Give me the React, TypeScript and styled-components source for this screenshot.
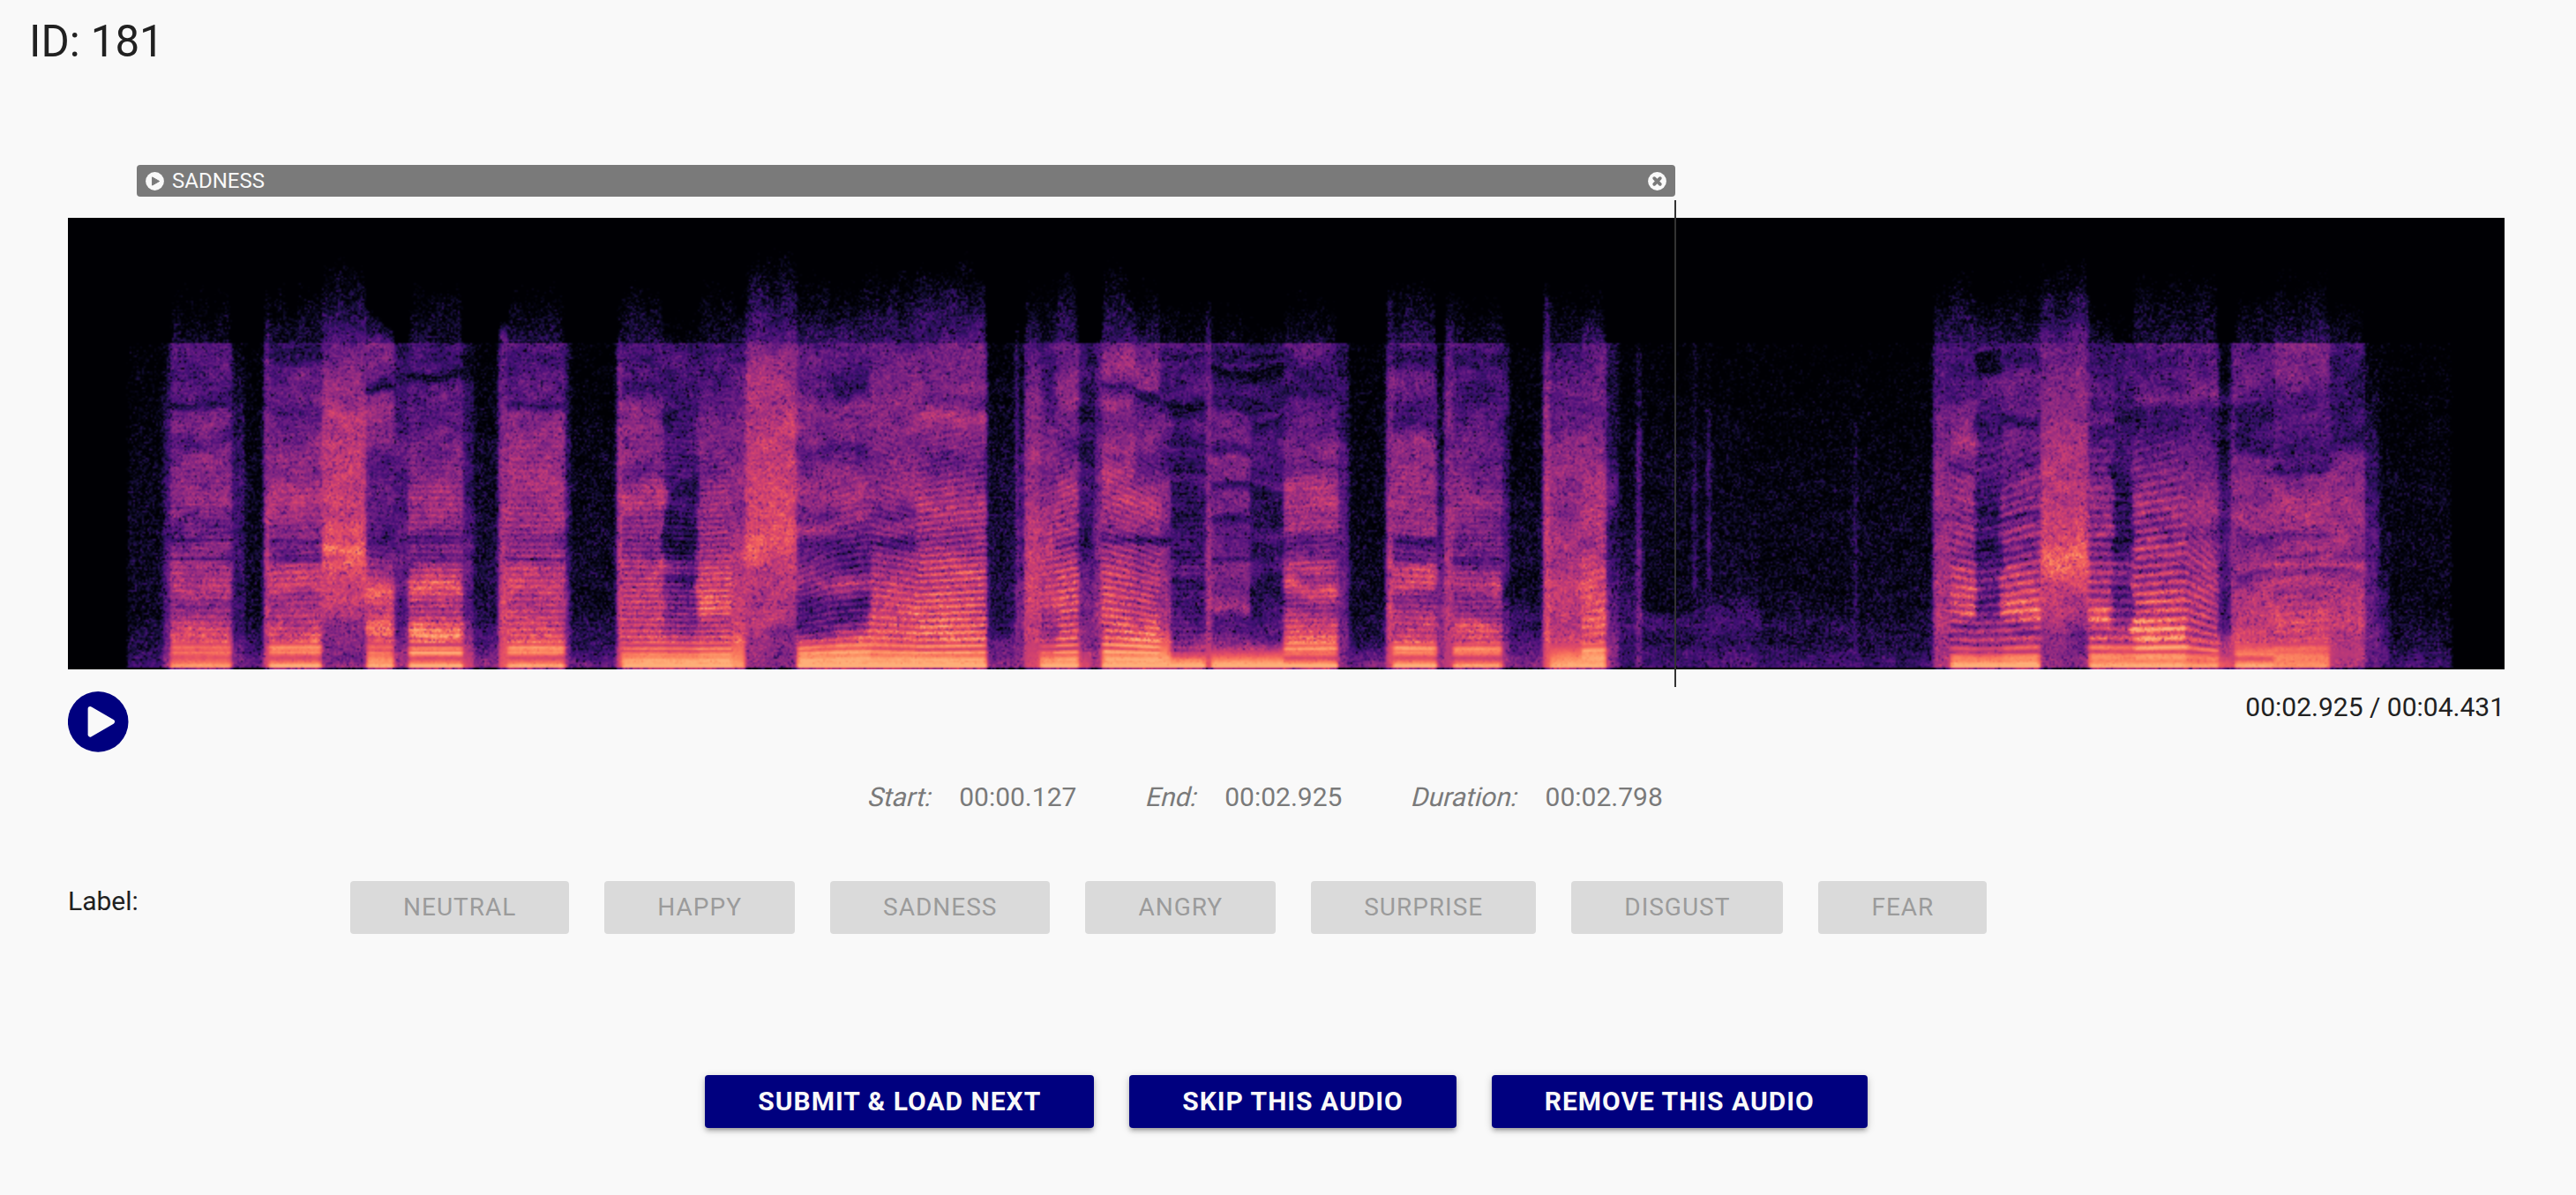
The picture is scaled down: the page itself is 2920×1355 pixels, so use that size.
import React, { useLayoutEffect, useRef } from "react";
import styled, { createGlobalStyle } from "styled-components";

const GlobalStyle = createGlobalStyle`
  *, *::before, *::after { box-sizing: border-box; }
  html, body { margin: 0; background: #f9f9f9; }
  body {
    font-family: Roboto, "Liberation Sans", sans-serif;
    font-size: 30px;
    line-height: 45px;
    color: #212121;
  }
`;

/* ---------- spectrogram data ---------- */

type Point = [y: number, level: number];

interface Segment {
  from: number;
  to: number;
  /** highest point that the energy above the 143px cut-off reaches */
  top?: number;
  /** level just above the cut-off */
  air?: number;
  profile: Point[];
  /** harmonic spacing at the start and at the end of the segment */
  pitch?: [number, number];
  ripple?: number;
}

const WIDTH = 2762;
const HEIGHT = 512;
const CUTOFF = 143;

const SEGMENTS: Segment[] = [
  { from: 66, to: 108, profile: [[150, 0.0], [300, 0.03], [450, 0.06], [490, 0.14], [507, 0.24]] },
  { from: 108, to: 117, profile: [[143, 0.06], [250, 0.22], [400, 0.26], [480, 0.36], [507, 0.5]] },
  { from: 117, to: 186, top: 76, air: 0.09, pitch: [7, 7], ripple: 0.05, profile: [[143, 0.31], [180, 0.29], [207, 0.29], [213, 0.12], [219, 0.34], [235, 0.41], [258, 0.3], [270, 0.4], [320, 0.46], [345, 0.36], [364, 0.34], [366, 0.22], [370, 0.42], [385, 0.36], [387, 0.24], [391, 0.48], [425, 0.54], [438, 0.4], [458, 0.5], [475, 0.6], [492, 0.72], [500, 0.64], [507, 0.8]] },
  { from: 186, to: 200, profile: [[143, 0.06], [250, 0.18], [350, 0.24], [450, 0.2], [507, 0.36]] },
  { from: 200, to: 222, profile: [[150, 0.0], [300, 0.03], [450, 0.07], [507, 0.3]] },
  { from: 222, to: 228, top: 66, air: 0.25, profile: [[143, 0.35], [250, 0.45], [400, 0.55], [507, 0.6]] },
  { from: 228, to: 288, top: 76, air: 0.12, pitch: [7, 7.2], ripple: 0.06, profile: [[143, 0.27], [160, 0.2], [175, 0.33], [210, 0.35], [225, 0.3], [260, 0.42], [300, 0.43], [325, 0.53], [345, 0.46], [363, 0.4], [366, 0.22], [370, 0.34], [385, 0.38], [387, 0.3], [393, 0.5], [422, 0.62], [432, 0.46], [455, 0.5], [468, 0.62], [480, 0.64], [490, 0.8], [500, 0.6], [507, 0.85]] },
  { from: 288, to: 339, top: 45, air: 0.26, profile: [[143, 0.36], [180, 0.42], [225, 0.53], [300, 0.54], [340, 0.59], [368, 0.63], [378, 0.74], [386, 0.6], [392, 0.69], [415, 0.6], [450, 0.5], [462, 0.4], [500, 0.36], [507, 0.45]] },
  { from: 339, to: 370, top: 112, air: 0.24, pitch: [7.2, 7], ripple: 0.05, profile: [[143, 0.4], [182, 0.34], [190, 0.18], [194, 0.06], [200, 0.4], [220, 0.46], [255, 0.38], [280, 0.26], [320, 0.36], [366, 0.24], [390, 0.42], [410, 0.56], [425, 0.66], [445, 0.54], [463, 0.74], [475, 0.6], [490, 0.68], [507, 0.84]] },
  { from: 370, to: 387, profile: [[143, 0.15], [190, 0.22], [260, 0.32], [330, 0.24], [390, 0.35], [460, 0.25], [507, 0.5]] },
  { from: 387, to: 449, top: 76, air: 0.12, pitch: [6.8, 6.8], ripple: 0.08, profile: [[143, 0.28], [172, 0.28], [178, 0.04], [182, 0.1], [188, 0.32], [230, 0.33], [265, 0.38], [310, 0.47], [350, 0.47], [366, 0.28], [372, 0.42], [387, 0.34], [394, 0.48], [421, 0.67], [435, 0.54], [450, 0.5], [462, 0.64], [474, 0.8], [484, 0.6], [493, 0.85], [500, 0.6], [507, 0.86]] },
  { from: 449, to: 460, profile: [[143, 0.1], [175, 0.02], [200, 0.16], [350, 0.26], [400, 0.36], [450, 0.3], [507, 0.6]] },
  { from: 460, to: 488, profile: [[150, 0.0], [250, 0.05], [400, 0.1], [460, 0.14], [507, 0.42]] },
  { from: 488, to: 498, top: 110, air: 0.32, profile: [[143, 0.34], [250, 0.42], [350, 0.48], [440, 0.56], [507, 0.66]] },
  { from: 498, to: 564, top: 72, air: 0.12, pitch: [6.9, 6.9], ripple: 0.07, profile: [[143, 0.34], [160, 0.25], [190, 0.34], [210, 0.3], [216, 0.22], [225, 0.4], [260, 0.46], [310, 0.48], [345, 0.48], [364, 0.38], [383, 0.48], [387, 0.34], [393, 0.52], [420, 0.56], [440, 0.5], [465, 0.62], [480, 0.64], [491, 0.82], [500, 0.6], [507, 0.82]] },
  { from: 564, to: 570, profile: [[200, 0.1], [350, 0.2], [507, 0.4]] },
  { from: 570, to: 622, profile: [[150, 0.0], [300, 0.04], [440, 0.07], [490, 0.16], [507, 0.34]] },
  { from: 622, to: 629, top: 80, air: 0.26, profile: [[143, 0.34], [220, 0.45], [300, 0.5], [507, 0.62]] },
  { from: 629, to: 677, top: 70, air: 0.14, pitch: [6.6, 6.6], ripple: 0.1, profile: [[143, 0.29], [195, 0.26], [215, 0.42], [270, 0.44], [285, 0.34], [300, 0.46], [325, 0.55], [345, 0.44], [380, 0.38], [393, 0.52], [430, 0.54], [460, 0.58], [482, 0.6], [492, 0.7], [507, 0.88]] },
  { from: 677, to: 714, top: 105, air: 0.05, pitch: [6.6, 6.5], ripple: 0.1, profile: [[143, 0.2], [170, 0.28], [215, 0.24], [225, 0.14], [235, 0.26], [290, 0.26], [308, 0.14], [320, 0.24], [335, 0.14], [385, 0.15], [392, 0.35], [405, 0.36], [414, 0.16], [420, 0.32], [455, 0.4], [480, 0.58], [492, 0.68], [507, 0.88]] },
  { from: 714, to: 752, top: 70, air: 0.12, pitch: [6.5, 6.6], ripple: 0.11, profile: [[143, 0.28], [200, 0.3], [235, 0.37], [270, 0.38], [295, 0.36], [325, 0.5], [350, 0.42], [375, 0.46], [395, 0.56], [420, 0.58], [445, 0.68], [460, 0.5], [482, 0.62], [492, 0.74], [507, 0.88]] },
  { from: 752, to: 769, top: 70, air: 0.14, profile: [[143, 0.28], [230, 0.36], [320, 0.45], [370, 0.5], [420, 0.52], [465, 0.6], [507, 0.8]] },
  { from: 769, to: 826, top: 36, air: 0.28, profile: [[143, 0.38], [170, 0.48], [220, 0.53], [280, 0.57], [330, 0.61], [375, 0.64], [395, 0.56], [430, 0.5], [460, 0.5], [475, 0.4], [507, 0.42]] },
  { from: 826, to: 868, top: 60, air: 0.18, pitch: [6.6, 7.6], ripple: 0.08, profile: [[143, 0.34], [195, 0.32], [210, 0.42], [250, 0.38], [262, 0.26], [275, 0.38], [300, 0.46], [340, 0.36], [352, 0.48], [368, 0.28], [390, 0.34], [415, 0.46], [440, 0.28], [465, 0.34], [480, 0.6], [492, 0.76], [507, 0.88]] },
  { from: 868, to: 909, top: 66, air: 0.2, pitch: [7.6, 8], ripple: 0.09, profile: [[143, 0.36], [170, 0.32], [188, 0.18], [200, 0.26], [215, 0.44], [250, 0.4], [262, 0.26], [280, 0.38], [310, 0.5], [340, 0.42], [366, 0.3], [395, 0.3], [412, 0.5], [435, 0.24], [455, 0.34], [470, 0.56], [484, 0.72], [507, 0.88]] },
  { from: 909, to: 964, top: 56, air: 0.23, pitch: [8, 7.4], ripple: 0.1, profile: [[143, 0.33], [190, 0.42], [230, 0.45], [270, 0.38], [310, 0.48], [340, 0.36], [355, 0.44], [368, 0.26], [390, 0.48], [412, 0.52], [430, 0.54], [455, 0.62], [470, 0.66], [490, 0.7], [507, 0.88]] },
  { from: 964, to: 1042, top: 48, air: 0.25, pitch: [7.3, 7.7], ripple: 0.14, profile: [[143, 0.38], [190, 0.42], [208, 0.36], [225, 0.52], [255, 0.4], [270, 0.34], [300, 0.44], [335, 0.52], [368, 0.42], [385, 0.52], [410, 0.56], [435, 0.58], [460, 0.66], [475, 0.68], [492, 0.7], [507, 0.9]] },
  { from: 1042, to: 1074, profile: [[150, 0.04], [200, 0.06], [360, 0.08], [450, 0.14], [507, 0.4]] },
  { from: 1074, to: 1079, top: 120, air: 0.2, profile: [[143, 0.24], [250, 0.34], [400, 0.36], [507, 0.45]] },
  { from: 1079, to: 1085, profile: [[200, 0.04], [507, 0.4]] },
  { from: 1085, to: 1103, top: 66, air: 0.18, profile: [[143, 0.3], [220, 0.42], [300, 0.46], [370, 0.54], [430, 0.6], [460, 0.52], [507, 0.6]] },
  { from: 1103, to: 1120, top: 66, air: 0.1, pitch: [7.4, 7.6], ripple: 0.07, profile: [[143, 0.28], [190, 0.22], [225, 0.36], [300, 0.4], [330, 0.48], [370, 0.5], [430, 0.56], [465, 0.42], [490, 0.62], [507, 0.86]] },
  { from: 1120, to: 1147, top: 56, air: 0.25, pitch: [7.6, 8], ripple: 0.15, profile: [[143, 0.32], [180, 0.4], [208, 0.48], [235, 0.36], [260, 0.3], [300, 0.48], [350, 0.48], [372, 0.38], [405, 0.56], [435, 0.6], [460, 0.6], [490, 0.66], [507, 0.88]] },
  { from: 1147, to: 1160, profile: [[143, 0.2], [215, 0.16], [218, 0.06], [250, 0.22], [262, 0.08], [300, 0.26], [365, 0.12], [400, 0.32], [460, 0.36], [507, 0.6]] },
  { from: 1160, to: 1165, profile: [[143, 0.1], [300, 0.14], [507, 0.44]] },
  { from: 1165, to: 1172, top: 130, air: 0.25, profile: [[143, 0.3], [300, 0.34], [507, 0.5]] },
  { from: 1172, to: 1209, top: 56, air: 0.24, pitch: [8.2, 7.6], ripple: 0.14, profile: [[143, 0.42], [170, 0.5], [193, 0.34], [197, 0.14], [202, 0.3], [215, 0.48], [240, 0.38], [265, 0.46], [310, 0.54], [340, 0.5], [358, 0.42], [366, 0.26], [372, 0.46], [405, 0.56], [435, 0.58], [465, 0.64], [490, 0.74], [507, 0.88]] },
  { from: 1209, to: 1238, top: 62, air: 0.16, pitch: [7.6, 7], ripple: 0.12, profile: [[143, 0.34], [160, 0.38], [195, 0.44], [203, 0.12], [212, 0.34], [250, 0.38], [280, 0.34], [320, 0.52], [358, 0.44], [366, 0.18], [373, 0.4], [405, 0.5], [450, 0.5], [468, 0.68], [492, 0.78], [507, 0.88]] },
  { from: 1238, to: 1250, top: 100, air: 0.06, profile: [[143, 0.3], [154, 0.14], [205, 0.32], [209, 0.1], [225, 0.36], [282, 0.22], [300, 0.44], [330, 0.44], [360, 0.3], [366, 0.1], [375, 0.42], [460, 0.48], [507, 0.88]] },
  { from: 1250, to: 1290, top: 95, air: 0.05, pitch: [7, 7], ripple: 0.06, profile: [[143, 0.3], [152, 0.28], [155, 0.1], [160, 0.28], [200, 0.3], [208, 0.18], [215, 0.06], [222, 0.16], [235, 0.32], [255, 0.18], [265, 0.3], [285, 0.22], [290, 0.12], [296, 0.28], [320, 0.16], [345, 0.14], [370, 0.2], [385, 0.16], [395, 0.34], [410, 0.3], [415, 0.12], [425, 0.26], [440, 0.18], [460, 0.26], [478, 0.34], [492, 0.5], [507, 0.88]] },
  { from: 1290, to: 1296, top: 90, air: 0.3, profile: [[143, 0.36], [300, 0.42], [507, 0.6]] },
  { from: 1296, to: 1340, top: 100, air: 0.04, profile: [[143, 0.28], [152, 0.1], [163, 0.32], [170, 0.03], [178, 0.12], [195, 0.28], [214, 0.14], [225, 0.34], [255, 0.36], [266, 0.18], [275, 0.4], [300, 0.36], [305, 0.16], [315, 0.42], [336, 0.38], [342, 0.2], [350, 0.34], [384, 0.32], [387, 0.22], [395, 0.4], [430, 0.38], [446, 0.52], [458, 0.3], [475, 0.28], [490, 0.54], [507, 0.88]] },
  { from: 1340, to: 1378, top: 120, air: 0.03, profile: [[143, 0.14], [150, 0.28], [155, 0.05], [162, 0.3], [168, 0.03], [178, 0.04], [188, 0.26], [215, 0.2], [225, 0.28], [230, 0.1], [240, 0.26], [280, 0.28], [291, 0.14], [305, 0.3], [312, 0.12], [335, 0.14], [348, 0.12], [362, 0.26], [372, 0.13], [385, 0.16], [395, 0.3], [413, 0.12], [440, 0.16], [460, 0.3], [475, 0.22], [490, 0.54], [507, 0.88]] },
  { from: 1378, to: 1440, top: 76, air: 0.09, pitch: [6.4, 6.6], ripple: 0.07, profile: [[143, 0.34], [172, 0.24], [185, 0.28], [197, 0.2], [210, 0.3], [250, 0.33], [270, 0.42], [283, 0.36], [300, 0.48], [325, 0.53], [350, 0.44], [362, 0.34], [385, 0.36], [393, 0.56], [405, 0.42], [418, 0.62], [440, 0.42], [460, 0.62], [475, 0.64], [490, 0.78], [500, 0.6], [507, 0.88]] },
  { from: 1440, to: 1452, profile: [[143, 0.16], [175, 0.1], [190, 0.24], [240, 0.22], [243, 0.05], [260, 0.3], [350, 0.3], [400, 0.34], [460, 0.36], [507, 0.42]] },
  { from: 1452, to: 1495, profile: [[150, 0.0], [300, 0.03], [440, 0.06], [485, 0.16], [507, 0.38]] },
  { from: 1495, to: 1502, top: 66, air: 0.28, profile: [[143, 0.34], [300, 0.48], [507, 0.62]] },
  { from: 1502, to: 1553, top: 66, air: 0.15, pitch: [6.9, 6.7], ripple: 0.07, profile: [[143, 0.34], [158, 0.2], [190, 0.36], [210, 0.3], [232, 0.24], [250, 0.46], [300, 0.46], [335, 0.48], [358, 0.46], [367, 0.2], [376, 0.36], [387, 0.3], [397, 0.54], [418, 0.56], [432, 0.38], [458, 0.56], [475, 0.56], [490, 0.82], [500, 0.6], [507, 0.88]] },
  { from: 1553, to: 1560, profile: [[143, 0.02], [300, 0.12], [507, 0.5]] },
  { from: 1560, to: 1570, top: 66, air: 0.22, profile: [[143, 0.34], [300, 0.42], [400, 0.5], [507, 0.56]] },
  { from: 1570, to: 1626, top: 85, air: 0.08, pitch: [6.6, 6.6], ripple: 0.06, profile: [[143, 0.3], [165, 0.2], [185, 0.32], [207, 0.16], [220, 0.3], [270, 0.34], [300, 0.38], [325, 0.45], [355, 0.38], [383, 0.34], [388, 0.24], [400, 0.42], [415, 0.55], [430, 0.4], [455, 0.46], [467, 0.62], [480, 0.58], [491, 0.8], [500, 0.56], [507, 0.82]] },
  { from: 1626, to: 1635, top: 120, air: 0.03, profile: [[143, 0.16], [300, 0.24], [400, 0.28], [427, 0.06], [440, 0.26], [507, 0.5]] },
  { from: 1635, to: 1673, profile: [[150, 0.0], [300, 0.03], [440, 0.08], [507, 0.4]] },
  { from: 1673, to: 1681, top: 70, air: 0.33, profile: [[143, 0.36], [230, 0.5], [380, 0.58], [507, 0.66]] },
  { from: 1681, to: 1717, top: 76, air: 0.08, profile: [[143, 0.3], [150, 0.15], [170, 0.28], [200, 0.34], [240, 0.32], [260, 0.42], [300, 0.45], [330, 0.42], [380, 0.48], [430, 0.54], [460, 0.52], [485, 0.6], [493, 0.7], [507, 0.84]] },
  { from: 1717, to: 1744, top: 70, air: 0.18, pitch: [8.6, 9.2], ripple: 0.07, profile: [[143, 0.34], [170, 0.34], [200, 0.42], [220, 0.32], [260, 0.42], [300, 0.52], [370, 0.48], [410, 0.6], [455, 0.68], [475, 0.6], [492, 0.8], [507, 0.84]] },
  { from: 1744, to: 1758, profile: [[143, 0.1], [270, 0.12], [290, 0.28], [330, 0.28], [350, 0.12], [430, 0.26], [507, 0.44]] },
  { from: 1758, to: 1779, profile: [[143, 0.0], [300, 0.03], [507, 0.2]] },
  { from: 1779, to: 1785, top: 135, air: 0.02, profile: [[143, 0.1], [235, 0.14], [242, 0.32], [400, 0.36], [507, 0.4]] },
  { from: 1785, to: 1843, profile: [[143, 0.0], [300, 0.04], [440, 0.05], [455, 0.22], [470, 0.1], [507, 0.24]] },
  { from: 1843, to: 1847, profile: [[240, 0.1], [320, 0.3], [415, 0.3], [430, 0.08], [507, 0.24]] },
  { from: 1847, to: 1858, profile: [[143, 0.0], [420, 0.06], [460, 0.16], [507, 0.24]] },
  { from: 1858, to: 1862, profile: [[200, 0.04], [240, 0.28], [410, 0.32], [430, 0.1], [507, 0.28]] },
  { from: 1862, to: 1918, profile: [[143, -0.01], [300, 0.03], [420, 0.06], [458, 0.24], [478, 0.16], [507, 0.26]] },
  { from: 1918, to: 2024, profile: [[143, -0.02], [300, 0.02], [420, 0.03], [450, 0.07], [458, 0.14], [478, 0.1], [507, 0.24]] },
  { from: 2024, to: 2028, profile: [[220, 0.02], [240, 0.18], [440, 0.19], [507, 0.26]] },
  { from: 2028, to: 2114, profile: [[143, -0.02], [300, 0.02], [440, 0.05], [490, 0.12], [507, 0.22]] },
  { from: 2114, to: 2135, top: 66, air: 0.15, profile: [[143, 0.25], [210, 0.32], [260, 0.42], [340, 0.44], [430, 0.52], [480, 0.48], [507, 0.5]] },
  { from: 2135, to: 2164, top: 60, air: 0.18, pitch: [10.2, 9.6], ripple: 0.13, profile: [[143, 0.25], [200, 0.32], [240, 0.48], [272, 0.46], [288, 0.3], [300, 0.46], [360, 0.42], [380, 0.38], [400, 0.52], [425, 0.6], [450, 0.62], [465, 0.42], [490, 0.56], [505, 0.84]] },
  { from: 2164, to: 2193, top: 92, air: 0.14, pitch: [9.6, 10], ripple: 0.11, profile: [[143, 0.2], [148, 0.28], [152, 0.04], [172, 0.04], [180, 0.32], [230, 0.24], [280, 0.3], [310, 0.2], [330, 0.15], [350, 0.24], [372, 0.14], [395, 0.24], [410, 0.36], [440, 0.28], [465, 0.44], [490, 0.52], [505, 0.84]] },
  { from: 2193, to: 2237, top: 62, air: 0.13, pitch: [10, 10.8], ripple: 0.14, profile: [[143, 0.27], [165, 0.24], [180, 0.36], [220, 0.34], [230, 0.14], [240, 0.36], [285, 0.3], [300, 0.4], [335, 0.44], [340, 0.26], [355, 0.45], [380, 0.36], [400, 0.52], [430, 0.56], [450, 0.7], [465, 0.4], [490, 0.62], [505, 0.86]] },
  { from: 2237, to: 2290, top: 45, air: 0.25, profile: [[143, 0.34], [190, 0.42], [240, 0.5], [300, 0.53], [350, 0.58], [372, 0.62], [382, 0.7], [400, 0.69], [412, 0.58], [450, 0.5], [475, 0.38], [507, 0.42]] },
  { from: 2290, to: 2318, top: 82, air: 0.14, pitch: [10.6, 10.6], ripple: 0.13, profile: [[143, 0.18], [165, 0.16], [185, 0.32], [215, 0.28], [235, 0.36], [246, 0.16], [265, 0.34], [310, 0.42], [360, 0.46], [365, 0.3], [395, 0.5], [430, 0.5], [458, 0.7], [470, 0.5], [495, 0.74], [507, 0.82]] },
  { from: 2318, to: 2341, top: 105, air: 0.06, pitch: [10.5, 10.5], ripple: 0.1, profile: [[143, 0.26], [200, 0.28], [218, 0.14], [235, 0.2], [280, 0.2], [310, 0.15], [350, 0.17], [370, 0.12], [395, 0.4], [430, 0.26], [455, 0.4], [475, 0.54], [507, 0.82]] },
  { from: 2341, to: 2400, top: 62, air: 0.14, pitch: [10.1, 10.7], ripple: 0.16, profile: [[143, 0.36], [165, 0.26], [190, 0.3], [205, 0.4], [220, 0.18], [235, 0.26], [265, 0.34], [300, 0.42], [330, 0.48], [360, 0.4], [375, 0.5], [390, 0.42], [420, 0.54], [450, 0.56], [465, 0.76], [485, 0.72], [507, 0.82]] },
  { from: 2400, to: 2438, top: 60, air: 0.14, pitch: [10.7, 8.4], ripple: 0.14, profile: [[143, 0.36], [170, 0.3], [200, 0.42], [220, 0.26], [250, 0.3], [300, 0.42], [330, 0.46], [360, 0.38], [390, 0.46], [420, 0.5], [450, 0.5], [475, 0.54], [495, 0.68], [507, 0.78]] },
  { from: 2438, to: 2452, profile: [[143, 0.05], [180, 0.03], [210, 0.24], [225, 0.06], [250, 0.2], [264, 0.04], [300, 0.24], [400, 0.28], [470, 0.3], [507, 0.66]] },
  { from: 2452, to: 2457, top: 120, air: 0.22, profile: [[143, 0.34], [300, 0.44], [507, 0.56]] },
  { from: 2457, to: 2500, top: 78, air: 0.12, profile: [[143, 0.34], [180, 0.36], [210, 0.3], [222, 0.2], [250, 0.25], [262, 0.14], [275, 0.38], [288, 0.32], [295, 0.4], [330, 0.44], [355, 0.46], [362, 0.34], [385, 0.42], [398, 0.54], [404, 0.34], [420, 0.52], [460, 0.52], [480, 0.58], [495, 0.76], [500, 0.62], [507, 0.84]] },
  { from: 2500, to: 2565, top: 60, air: 0.17, pitch: [9.6, 10.4], ripple: 0.04, profile: [[143, 0.4], [180, 0.4], [202, 0.3], [225, 0.32], [258, 0.26], [272, 0.34], [282, 0.2], [292, 0.42], [320, 0.48], [355, 0.48], [359, 0.36], [375, 0.48], [385, 0.4], [396, 0.56], [404, 0.4], [418, 0.54], [426, 0.42], [440, 0.5], [458, 0.6], [475, 0.54], [492, 0.72], [507, 0.78]] },
  { from: 2565, to: 2605, top: 95, air: 0.1, profile: [[143, 0.28], [180, 0.24], [200, 0.16], [220, 0.26], [248, 0.2], [270, 0.36], [310, 0.46], [355, 0.44], [375, 0.46], [385, 0.4], [396, 0.56], [404, 0.34], [418, 0.52], [440, 0.5], [460, 0.6], [480, 0.5], [495, 0.54], [507, 0.5]] },
  { from: 2605, to: 2620, profile: [[143, 0.02], [250, 0.14], [300, 0.22], [400, 0.3], [450, 0.32], [507, 0.32]] },
  { from: 2620, to: 2632, profile: [[200, 0.0], [380, 0.06], [440, 0.2], [507, 0.26]] },
  { from: 2632, to: 2705, profile: [[143, -0.02], [300, 0.02], [440, 0.03], [485, 0.1], [507, 0.24]] },
];

const MAGMA: [number, number, number][] = [
  [0, 0, 4], [6, 5, 24], [20, 14, 54], [39, 17, 84], [59, 15, 112], [80, 18, 123],
  [100, 26, 128], [120, 34, 130], [140, 41, 129], [161, 47, 127], [183, 55, 121],
  [203, 62, 113], [222, 73, 104], [237, 89, 95], [247, 112, 92], [252, 137, 97],
  [254, 159, 109], [254, 184, 128], [254, 207, 146],
];

const hash = (x: number, y: number): number => {
  let h = Math.imul(x + 1013, 374761393) ^ Math.imul(y + 733, 668265263);
  h = Math.imul(h ^ (h >>> 13), 1274126177);
  h = Math.imul(h ^ (h >>> 16), 2246822519);
  return ((h ^ (h >>> 15)) >>> 0) / 4294967296;
};

const smoothNoise = (x: number, y: number): number => {
  const xi = Math.floor(x);
  const yi = Math.floor(y);
  const fx = (x - xi) ** 2 * (3 - 2 * (x - xi));
  const fy = (y - yi) ** 2 * (3 - 2 * (y - yi));
  const a = hash(xi, yi) * (1 - fx) + hash(xi + 1, yi) * fx;
  const b = hash(xi, yi + 1) * (1 - fx) + hash(xi + 1, yi + 1) * fx;
  return a * (1 - fy) + b * fy - 0.5;
};

const readProfile = (profile: Point[], y: number): number => {
  if (y <= profile[0][0]) return profile[0][1];
  for (let i = 1; i < profile.length; i++) {
    const [y1, v1] = profile[i];
    if (y <= y1) {
      const [y0, v0] = profile[i - 1];
      return v0 + ((v1 - v0) * (y - y0)) / (y1 - y0);
    }
  }
  return profile[profile.length - 1][1];
};

const SILENCE = -0.3;

const levelAt = (px: number, y: number): number => {
  /* quiet onsets stay upright while neighbouring sounds flow into each other */
  const drift = (smoothNoise(px / 40, y / 26) + smoothNoise(px / 25 + 40, y / 9) * 0.6) * 7;
  const here = SEGMENTS.find((s) => px >= s.from && px < s.to);
  const moved = SEGMENTS.find((s) => px + drift >= s.from && px + drift < s.to);
  const wide = (s?: Segment) => s !== undefined && s.pitch !== undefined;
  const seg = wide(here) && wide(moved) ? moved : here;
  if (!seg) return SILENCE;
  if (y < CUTOFF) {
    if (seg.top === undefined || seg.air === undefined) return SILENCE;
    const edge = seg.top + smoothNoise(px / 11, y / 50) * 30;
    const rise = Math.min(1, (y - edge) / (CUTOFF - seg.top));
    return rise < 0 ? SILENCE : -0.14 + (seg.air + 0.12) * rise ** 0.72;
  }
  const bend = smoothNoise(px / 30, y / 60) * 14;
  const wobble = y > 478 ? 0 : y > 355 && y < 392 ? 0 : bend;
  let level = readProfile(seg.profile, Math.max(CUTOFF, y + wobble));
  if (level < 0.2 && seg.profile[0][1] < 0.1) level -= 0.05 * Math.max(0, 1 - (y - CUTOFF) / 160);
  if (seg.pitch && seg.ripple) {
    const t = (px - seg.from) / (seg.to - seg.from);
    const pitch = seg.pitch[0] + (seg.pitch[1] - seg.pitch[0]) * t;
    const phase = ((HEIGHT - 4 - y) / pitch) * Math.PI * 2;
    const depth = Math.min(1, Math.max(0.1, (y - 190) / 220));
    level += Math.cos(phase) * seg.ripple * 0.8 * depth * (y > 494 ? 0.3 : 1);
  }
  if (level > 0.2) level -= 0.025 + 0.03 * Math.max(0, 1 - (y - CUTOFF) / 250);
  if (y > 509) level -= 0.35;
  return level;
};

const renderSpectrogram = (canvas: HTMLCanvasElement) => {
  const ctx = canvas.getContext("2d");
  if (!ctx) return;
  const cols = canvas.width;
  const rows = canvas.height;
  const image = ctx.createImageData(cols, rows);
  const field = new Float32Array(cols * rows);
  for (let r = 0; r < rows; r++) {
    for (let c = 0; c < cols; c++) field[r * cols + c] = levelAt(c * 2 + 1, r * 2 + 1);
  }
  const weights = [0.08, 0.2, 0.44, 0.2, 0.08];
  for (let r = 0; r < rows; r++) {
    for (let c = 0; c < cols; c++) {
      const i = r * cols + c;
      let base = 0;
      for (let k = -2; k <= 2; k++) {
        const cc = Math.min(cols - 1, Math.max(0, c + k));
        base += field[r * cols + cc] * weights[k + 2];
      }
      const u = (hash(c, r) * 2 + hash(c >> 1, r + 999) + hash(c + 555, r >> 1)) / 4;
      const steady = r > 240 && base > 0.5 ? 0.25 : 1;
      const grain = u < 0.3 ? (u - 0.3) * 0.6 + (u - 0.5) * 0.24 : (u - 0.5) * 0.24;
      const patch = smoothNoise(c / 10, r / 8) * 0.09 + smoothNoise(c / 4 + 90, r / 3) * 0.07;
      let v = base + (grain + patch) * steady;
      if (base < 0.16) v = base + (u - 0.5) * 0.34 + patch * 0.5;
      v = Math.min(0.83, Math.max(0, v)) * 20;
      const k = Math.floor(v);
      const f = v - k;
      const from = MAGMA[k];
      const to = MAGMA[k + 1];
      for (let ch = 0; ch < 3; ch++) image.data[i * 4 + ch] = from[ch] + (to[ch] - from[ch]) * f;
      image.data[i * 4 + 3] = 255;
    }
  }
  ctx.putImageData(image, 0, 0);
};

/* ---------- layout ---------- */

const Page = styled.main`
  display: flex;
  flex-direction: column;
  height: 1355px;
  overflow: hidden;
`;

const Heading = styled.h1`
  margin: 0;
  padding: 17px 0 0 33px;
  height: 187px;
  font-size: 49.2px;
  line-height: 61px;
  font-weight: 400;
`;

const Content = styled.section`
  display: flex;
  flex-direction: column;
  width: 2762px;
  margin-left: 77px;
`;

const RegionTrack = styled.div`
  display: flex;
  height: 60px;
  padding-left: 78px;
`;

const Region = styled.div`
  display: flex;
  align-items: center;
  width: 1744px;
  height: 36px;
  padding: 0 10px;
  border-radius: 4px;
  background: #7a7a7a;
  color: #f9f9f9;
  font-size: 24px;
  line-height: 36px;
`;

const RegionName = styled.span`
  flex: 1;
  padding-left: 9px;
`;

const Stage = styled.div`
  position: relative;
  height: 512px;
`;

const Spectrogram = styled.canvas`
  display: block;
  width: 2762px;
  height: 512px;
  background: #000004;
`;

const Playhead = styled.div`
  position: absolute;
  left: 1821px;
  top: -20px;
  width: 2px;
  height: 552px;
  background: #333;
`;

const Controls = styled.div`
  display: flex;
  justify-content: space-between;
  align-items: flex-start;
  height: 122px;
  padding-top: 25px;
`;

const PlayButton = styled.button`
  display: flex;
  padding: 0;
  border: 0;
  background: none;
`;

const Clock = styled.div`
  padding-top: 1px;
  line-height: 34px;
`;

const Times = styled.dl`
  display: flex;
  justify-content: center;
  gap: 80px;
  height: 118px;
  margin: 0;
  padding-right: 46px;
  color: #7a7a7a;
`;

const TimeItem = styled.div`
  display: flex;
  align-items: flex-start;
  gap: 30px;
`;

const TimeName = styled.dt`
  transform: skewX(-14deg);
`;

const TimeValue = styled.dd`
  margin: 0;
`;

const LabelRow = styled.div`
  display: flex;
  height: 220px;
`;

const LabelTitle = styled.div`
  width: 320px;
`;

const ButtonGroup = styled.div<{ $centered?: boolean }>`
  display: flex;
  align-items: flex-start;
  gap: 40px;
  justify-content: ${(p) => (p.$centered ? "center" : "flex-start")};
`;

const Button = styled.button<{ $primary?: boolean }>`
  height: 60px;
  padding: 0 60px;
  border: 0;
  border-radius: 4px;
  font-family: inherit;
  font-size: ${(p) => (p.$primary ? 30 : 28)}px;
  font-weight: ${(p) => (p.$primary ? 700 : 400)};
  line-height: 60px;
  letter-spacing: 1px;
  text-transform: uppercase;
  white-space: nowrap;
  background: ${(p) => (p.$primary ? "#00007f" : "#dadada")};
  color: ${(p) => (p.$primary ? "#f9f9f9" : "#9b9b9b")};
  box-shadow: ${(p) =>
    p.$primary
      ? "0 4px 4px 0 rgba(0,0,0,.14), 0 6px 2px -4px rgba(0,0,0,.12), 0 2px 10px 0 rgba(0,0,0,.2)"
      : "none"};
`;

const PlayIcon = () => (
  <svg width="69" height="69" viewBox="0 0 69 69">
    <circle cx="34.2" cy="34.4" r="34.3" fill="#00007f" />
    <path
      d="M25.3 19.8 L50.3 34.4 L25.3 49 Z"
      fill="#f9f9f9"
      stroke="#f9f9f9"
      strokeWidth="5.4"
      strokeLinejoin="round"
    />
  </svg>
);

const SmallPlayIcon = () => (
  <svg width="21" height="21" viewBox="0 0 21 21">
    <circle cx="10.5" cy="10.5" r="10.4" fill="#f9f9f9" />
    <path d="M7.6 5.9 L15.6 10.5 L7.6 15.1 Z" fill="#7a7a7a" stroke="#7a7a7a" strokeWidth="1" strokeLinejoin="round" />
  </svg>
);

const CloseIcon = () => (
  <svg width="21" height="21" viewBox="0 0 21 21">
    <circle cx="10.5" cy="10.5" r="10.4" fill="#f9f9f9" />
    <path d="M7.2 7.2 L13.8 13.8 M13.8 7.2 L7.2 13.8" stroke="#7a7a7a" strokeWidth="3.8" strokeLinecap="round" />
  </svg>
);

const LABELS = ["Neutral", "Happy", "Sadness", "Angry", "Surprise", "Disgust", "Fear"];
const ACTIONS = ["Submit & load next", "Skip this audio", "Remove this audio"];
const TIMES = [
  { name: "Start:", value: "00:00.127" },
  { name: "End:", value: "00:02.925" },
  { name: "Duration:", value: "00:02.798" },
];

export default function App() {
  const canvasRef = useRef<HTMLCanvasElement>(null);

  useLayoutEffect(() => {
    if (canvasRef.current) renderSpectrogram(canvasRef.current);
  }, []);

  return (
    <Page>
      <GlobalStyle />
      <Heading>ID: 181</Heading>
      <Content>
        <RegionTrack>
          <Region>
            <SmallPlayIcon />
            <RegionName>SADNESS</RegionName>
            <CloseIcon />
          </Region>
        </RegionTrack>
        <Stage>
          <Spectrogram ref={canvasRef} width={WIDTH / 2} height={HEIGHT / 2} />
          <Playhead />
        </Stage>
        <Controls>
          <PlayButton aria-label="Play">
            <PlayIcon />
          </PlayButton>
          <Clock>00:02.925 / 00:04.431</Clock>
        </Controls>
        <Times>
          {TIMES.map((t) => (
            <TimeItem key={t.name}>
              <TimeName>{t.name}</TimeName>
              <TimeValue>{t.value}</TimeValue>
            </TimeItem>
          ))}
        </Times>
        <LabelRow>
          <LabelTitle>Label:</LabelTitle>
          <ButtonGroup>
            {LABELS.map((l) => (
              <Button key={l} disabled>
                {l}
              </Button>
            ))}
          </ButtonGroup>
        </LabelRow>
        <ButtonGroup $centered>
          {ACTIONS.map((a) => (
            <Button key={a} $primary>
              {a}
            </Button>
          ))}
        </ButtonGroup>
      </Content>
    </Page>
  );
}
